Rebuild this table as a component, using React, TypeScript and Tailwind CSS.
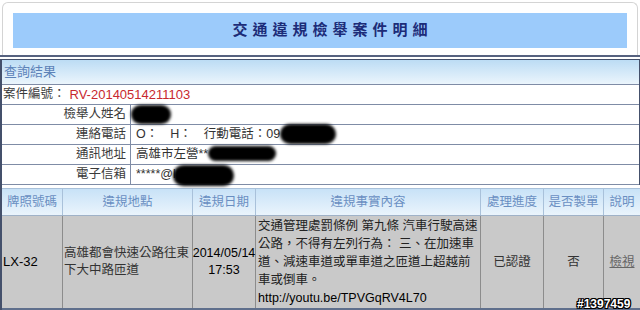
import React from "react";

const F = "font-['Liberation_Sans','Noto_Sans_CJK_TC',sans-serif]";

function Blob({ className }: { className: string }) {
  return <div className={"absolute bg-black rounded-full blur-[1.5px] " + className} />;
}

function InfoRow({ label, children }: { label: string; children?: React.ReactNode }) {
  return (
    <div className="flex h-[20px] border-b border-[#7f8ca6]">
      <div className="w-[129px] border-r border-[#7f8ca6] flex items-center justify-end pr-[4px] text-[12.5px] text-[#3a3a3a]">
        {label}
      </div>
      <div className="flex-1 flex items-center pl-[5px] text-[12.5px] text-[#333] whitespace-nowrap">{children}</div>
    </div>
  );
}

export default function App() {
  return (
    <div className={"relative w-[640px] h-[310px] bg-white overflow-hidden " + F}>
      {/* title panel */}
      <div className="mx-[2px] mt-[2px] h-[53px] border border-b-0 border-[#d4d4d4] rounded-t-[6px] pt-[10px] px-[10px]">
        <div className="h-[35px] bg-[#9ccbfb] flex items-center justify-center pl-[25px]">
          <span className="text-[15px] font-bold tracking-[5px] text-[#1c2c78]">交通違規檢舉案件明細</span>
        </div>
      </div>
      <div className="h-[2px] bg-[#56627f]" />
      <div className="h-[2px] bg-white" />

      {/* info table */}
      <div className="border-t border-l-2 border-r border-[#44506b]">
        <div className="h-[25px] border-b border-[#7f8ca6] bg-gradient-to-b from-[#bcdcf4] to-[#ebf5fc] flex items-center pl-[2px] text-[13px] text-[#5c82b8]">
          查詢結果
        </div>
        <div className="flex h-[20px] border-b border-[#7f8ca6] items-center pl-[1px] whitespace-nowrap">
          <span className="text-[12.5px] text-[#3a3a3a]">案件編號：</span>
          <span className="ml-[4px] text-[13px] text-[#c8282e]">RV-20140514211103</span>
        </div>
        <InfoRow label="檢舉人姓名" />
        <InfoRow label="連絡電話">
          <span>O：</span>
          <span className="ml-[12px]">H：</span>
          <span className="ml-[12px]">行動電話：09</span>
        </InfoRow>
        <InfoRow label="通訊地址">
          <span>高雄市左營**</span>
        </InfoRow>
        <InfoRow label="電子信箱">
          <span>*****@l</span>
        </InfoRow>
      </div>
      <div className="h-[3px] bg-white border-l-2 border-[#44506b]" />

      {/* violation table */}
      <div className="border-l-2 border-[#44506b]">
        <div className="grid grid-cols-[61px_130px_63px_225px_63px_60px_36px] h-[27px] border-t border-[#a9c1da] bg-gradient-to-b from-[#c8e2f7] to-[#eaf4fc] text-[12.5px] text-[#6a8fc2]">
          {["牌照號碼", "違規地點", "違規日期", "違規事實內容", "處理進度", "是否製單", "說明"].map((h, i) => (
            <div
              key={h}
              className={
                "flex items-center justify-center whitespace-nowrap " +
                (i < 6 ? "border-r border-[#a9c1da]" : "")
              }
            >
              {h}
            </div>
          ))}
        </div>
        <div className="grid grid-cols-[61px_130px_63px_225px_63px_60px_36px] h-[93px] bg-[#c9c9c9] border-t border-[#9fb2c8] text-[12.5px]">
          <div className="border-r border-[#8c8c8c] flex items-center pl-[1px] text-[13px] text-black">LX-32</div>
          <div className="border-r border-[#8c8c8c] flex items-center pl-[1px] text-[#333] leading-[17.5px] whitespace-nowrap">
            <div>
              高雄都會快速公路往東
              <br />
              下大中路匝道
            </div>
          </div>
          <div className="border-r border-[#8c8c8c] flex items-center justify-center text-center text-[12.5px] text-black leading-[17.5px]">
            <div>
              2014/05/14
              <br />
              17:53
            </div>
          </div>
          <div className="border-r border-[#8c8c8c] flex items-center pl-[2px] text-[#222] leading-[18px] whitespace-nowrap">
            <div>
              交通管理處罰條例 第九條 汽車行駛高速
              <br />
              公路，不得有左列行為： 三、在加速車
              <br />
              道、減速車道或單車道之匝道上超越前
              <br />
              車或倒車。
              <br />
              <span className="text-[12.5px] text-black">http://youtu.be/TPVGqRV4L70</span>
            </div>
          </div>
          <div className="border-r border-[#8c8c8c] flex items-center justify-center text-[#333]">已認證</div>
          <div className="border-r border-[#8c8c8c] flex items-center justify-center text-[#333]">否</div>
          <div className="flex items-center justify-center text-[#666] underline">檢視</div>
        </div>
        <div className="h-[2px] bg-[#5f6f8c]" />
        <div className="h-[4px] bg-[#bcd6ee]" />
      </div>

      {/* redactions */}
      <Blob className="left-[131px] top-[105px] w-[40px] h-[19px]" />
      <Blob className="left-[280px] top-[124px] w-[56px] h-[20px]" />
      <Blob className="left-[208px] top-[146px] w-[68px] h-[15px]" />
      <Blob className="left-[173px] top-[165px] w-[61px] h-[21px]" />

      {/* watermark */}
      <div className="absolute left-[577px] top-[295px] text-[12px] font-bold text-white [text-shadow:1px_0_#000,-1px_0_#000,0_1px_#000,0_-1px_#000,1px_1px_#000,-1px_-1px_#000,1px_-1px_#000,-1px_1px_#000]">
        #1397459
      </div>
    </div>
  );
}
